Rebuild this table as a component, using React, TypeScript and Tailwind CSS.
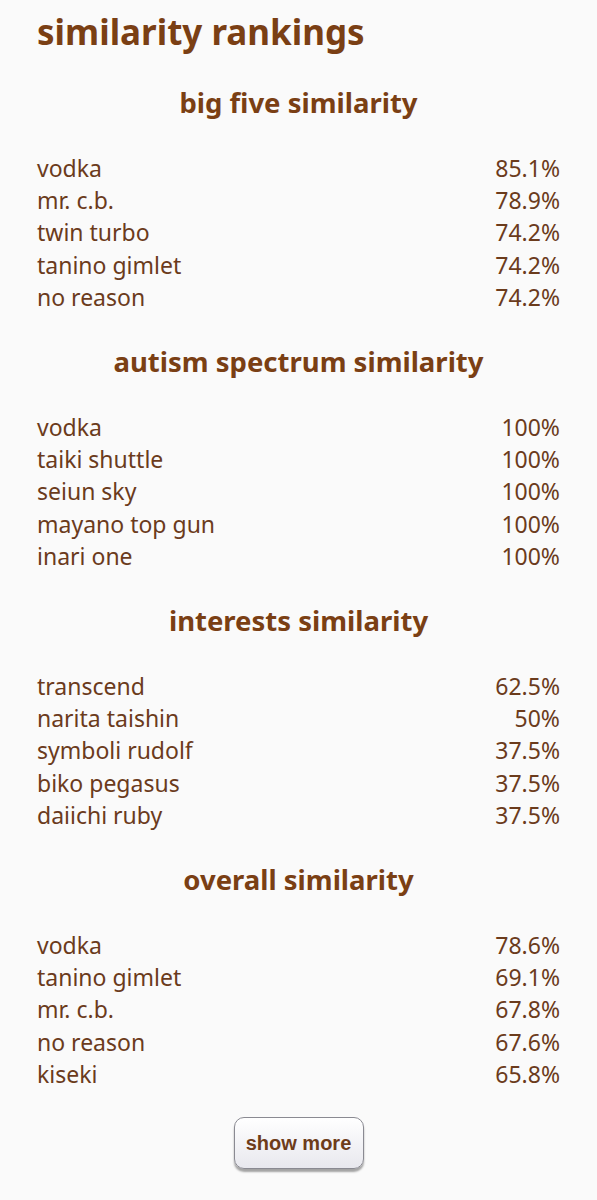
const sections = [
  {
    title: 'big five similarity',
    rows: [
      ['vodka', '85.1%'],
      ['mr. c.b.', '78.9%'],
      ['twin turbo', '74.2%'],
      ['tanino gimlet', '74.2%'],
      ['no reason', '74.2%'],
    ],
  },
  {
    title: 'autism spectrum similarity',
    rows: [
      ['vodka', '100%'],
      ['taiki shuttle', '100%'],
      ['seiun sky', '100%'],
      ['mayano top gun', '100%'],
      ['inari one', '100%'],
    ],
  },
  {
    title: 'interests similarity',
    rows: [
      ['transcend', '62.5%'],
      ['narita taishin', '50%'],
      ['symboli rudolf', '37.5%'],
      ['biko pegasus', '37.5%'],
      ['daiichi ruby', '37.5%'],
    ],
  },
  {
    title: 'overall similarity',
    rows: [
      ['vodka', '78.6%'],
      ['tanino gimlet', '69.1%'],
      ['mr. c.b.', '67.8%'],
      ['no reason', '67.6%'],
      ['kiseki', '65.8%'],
    ],
  },
];

export default function App() {
  return (
    <div
      className="min-h-[1200px] bg-[#fafafa] px-[37px] pt-[8px] text-[#6b3b1c]"
      style={{ fontFamily: '"Noto Sans", "Open Sans", sans-serif' }}
    >
      <h1 className="text-[35px] font-bold leading-[48px] text-[#7a3f14]">similarity rankings</h1>

      {sections.map((s, idx) => (
        <section key={s.title}>
          <h2
            className={`${idx === 0 ? 'mt-[29px]' : 'mt-[31px]'} text-center text-[27.5px] font-bold leading-[36px] text-[#7a3f14]`}
          >
            {s.title}
          </h2>
          <div className="mt-[31px]">
            {s.rows.map(([name, pct], i) => (
              <div key={i} className="flex justify-between text-[23px] leading-[32.2px]">
                <span>{name}</span>
                <span>{pct}</span>
              </div>
            ))}
          </div>
        </section>
      ))}

      <div className="mt-[27px] flex justify-center">
        <button
          className="h-[52px] w-[130px] rounded-[10px] border border-[#8a8a92] bg-gradient-to-b from-white to-[#e8e8ee] text-[20px] font-bold text-[#6e3c1a] shadow-[0_3px_2px_rgba(0,0,0,0.35)]"
          style={{ fontFamily: '"Liberation Sans", Arial, sans-serif' }}
        >
          show more
        </button>
      </div>
    </div>
  );
}
